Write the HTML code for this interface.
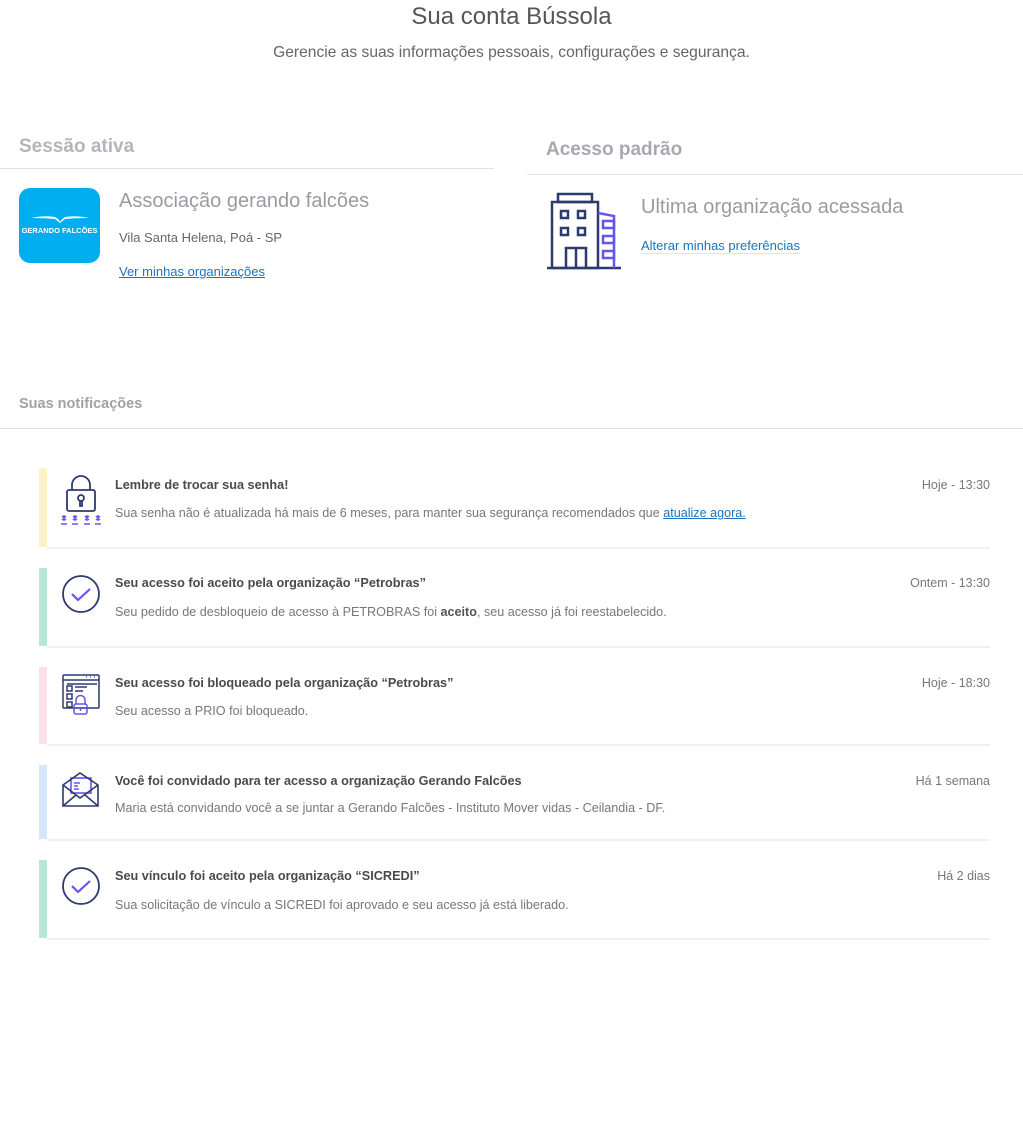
<!DOCTYPE html>
<html><head><meta charset="utf-8"><style>
*{margin:0;padding:0;box-sizing:border-box}
body{width:1023px;height:1140px;background:#fff;font-family:"Liberation Sans",sans-serif;position:relative;overflow:hidden;color:#555}
.a{position:absolute;white-space:nowrap}
.bar{position:absolute;left:39px;width:8px}
.line{position:absolute;left:47px;width:943px;height:2px;background:#f0f0f2}
.t{position:absolute;left:115px;font-size:12.7px;font-weight:bold;color:#4a4a4a;white-space:nowrap}
.d{position:absolute;left:115px;font-size:12.6px;color:#777;white-space:nowrap}
.tm{position:absolute;right:33px;font-size:12.5px;color:#777;white-space:nowrap}
a{color:#1a73c0;text-decoration:underline}
</style></head><body>
<div class="a" style="left:0;width:1023px;text-align:center;top:3px;font-size:24px;color:#555">Sua conta Bússola</div>
<div class="a" style="left:0;width:1023px;text-align:center;top:44px;font-size:15.6px;color:#666">Gerencie as suas informações pessoais, configurações e segurança.</div>

<div class="a" style="left:19px;top:136px;font-size:19px;font-weight:bold;color:#b4b4bc">Sessão ativa</div>
<div class="a" style="left:0;top:168px;width:494px;height:1px;background:#e2e2e6"></div>
<div class="a" style="left:19px;top:188px;width:81px;height:75px;border-radius:11px;background:#00aeef">
 <svg width="81" height="75" style="position:absolute;left:0;top:0"><path d="M12 30 Q24 27 36 29 Q40 31 41 34 Q43 31 46 29 Q58 27 70 30 Q56 30 46 31 L41 35 L36 31 Q26 30 12 30Z" fill="#fff"/></svg>
 <div class="a" style="left:0;width:81px;text-align:center;top:38px;font-size:7.5px;font-weight:bold;color:#fff">GERANDO FALCÕES</div>
</div>
<div class="a" style="left:119px;top:190px;font-size:20px;color:#9a9aa2">Associação gerando falcões</div>
<div class="a" style="left:119px;top:230px;font-size:13px;color:#666">Vila Santa Helena, Poá - SP</div>
<div class="a" style="left:119px;top:264px;font-size:13px"><a>Ver minhas organizações</a></div>

<div class="a" style="left:546px;top:139px;font-size:19px;font-weight:bold;color:#a8a8b0">Acesso padrão</div>
<div class="a" style="left:527px;top:174px;width:496px;height:1px;background:#e2e2e6"></div>
<svg class="a" style="left:540px;top:185px" width="90" height="90" viewBox="540 185 90 90" fill="none" stroke-width="2.5">
 <g stroke="#2d3a6e">
 <rect x="558" y="194" width="34" height="8"/>
 <rect x="552" y="202" width="46" height="66"/>
 <rect x="561" y="211" width="7" height="7"/><rect x="578" y="211" width="7" height="7"/>
 <rect x="561" y="228" width="7" height="7"/><rect x="578" y="228" width="7" height="7"/>
 <path d="M566 268V248H586V268M576 248V268M547 268H621"/>
 </g>
 <g stroke="#6655ee"><path d="M598 213L614 216V268"/>
 <rect x="603" y="221" width="11" height="7"/><rect x="603" y="236" width="11" height="7"/><rect x="603" y="251" width="11" height="7"/></g>
</svg>
<div class="a" style="left:641px;top:196px;font-size:20px;color:#9a9aa2">Ultima organização acessada</div>
<div class="a" style="left:641px;top:238px;font-size:13px"><a style="text-decoration:none;border-bottom:1px solid #dde6f0">Alterar minhas preferências</a></div>

<div class="a" style="left:19px;top:396px;font-size:14.5px;font-weight:bold;color:#a0a0a8">Suas notificações</div>
<div class="a" style="left:0;top:428px;width:1023px;height:1px;background:#e2e2e6"></div>

<!-- card1 -->
<div class="bar" style="top:468px;height:79px;background:#fdf1c8"></div>
<div class="line" style="top:547px"></div>
<svg class="a" style="left:58px;top:474px" width="46" height="54" fill="none" stroke-width="1.8">
 <g stroke="#2d3a6e"><path d="M14 16V11a9 9 0 0 1 18 0v5"/><rect x="9" y="16" width="28" height="21" rx="2"/><circle cx="23" cy="24" r="3"/><path d="M22 27v5h2v-5"/></g>
 <g stroke="#6655ee" stroke-width="1.4"><path d="M4 42l4 4M8 42l-4 4M6 41v6M15 42l4 4M19 42l-4 4M17 41v6M27 42l4 4M31 42l-4 4M29 41v6M38 42l4 4M42 42l-4 4M40 41v6M3 50h6M14 50h6M26 50h6M37 50h6"/></g>
</svg>
<div class="t" style="top:478px">Lembre de trocar sua senha!</div>
<div class="d" style="top:506px">Sua senha não é atualizada há mais de 6 meses, para manter sua segurança recomendados que <a>atualize agora.</a></div>
<div class="tm" style="top:478px">Hoje - 13:30</div>

<!-- card2 -->
<div class="bar" style="top:568px;height:78px;background:#b6e6d6"></div>
<div class="line" style="top:646px"></div>
<svg class="a" style="left:60px;top:574px" width="42" height="42" fill="none">
 <circle cx="21" cy="20" r="18" stroke="#2d3a6e" stroke-width="1.8"/>
 <path d="M12 20l6 6 12-11" stroke="#6655ee" stroke-width="2.2" stroke-linejoin="round"/>
</svg>
<div class="t" style="top:576px">Seu acesso foi aceito pela organização “Petrobras”</div>
<div class="d" style="top:605px">Seu pedido de desbloqueio de acesso à PETROBRAS foi <b style="color:#555">aceito</b>, seu acesso já foi reestabelecido.</div>
<div class="tm" style="top:576px">Ontem - 13:30</div>

<!-- card3 -->
<div class="bar" style="top:667px;height:77px;background:#fde0e6"></div>
<div class="line" style="top:744px"></div>
<svg class="a" style="left:62px;top:674px" width="40" height="44" fill="none" stroke-width="1.5">
 <g stroke="#2d3a6e"><rect x="1" y="1" width="36" height="33" rx="1"/><path d="M1 6h36M5 10h30M5 12h5v5H5zM5 20h5v5H5zM5 28h5v5H5zM13 13h12M13 17h8"/></g>
 <g stroke="#6655ee"><rect x="12" y="30" width="13" height="10" rx="2"/><path d="M14 30v-4a4.5 4.5 0 0 1 9 0v4M18.5 34v3"/><path d="M24 3h1M28 3h1M32 3h1"/></g>
</svg>
<div class="t" style="top:676px">Seu acesso foi bloqueado pela organização “Petrobras”</div>
<div class="d" style="top:704px">Seu acesso a PRIO foi bloqueado.</div>
<div class="tm" style="top:676px">Hoje - 18:30</div>

<!-- card4 -->
<div class="bar" style="top:765px;height:74px;background:#d4e6fc"></div>
<div class="line" style="top:839px"></div>
<svg class="a" style="left:61px;top:772px" width="40" height="36" fill="none" stroke-width="1.6">
 <rect x="10" y="6" width="20" height="15" fill="#fff" stroke="#6655ee"/>
 <path d="M13 11h6M13 14h4M13 17h5" stroke="#6655ee"/>
 <g stroke="#2d3a6e"><path d="M2 13L19 1l18 12v21H2z"/><path d="M2 13l17 13 18-13M2 34l13-11M37 34L24 23"/></g>
</svg>
<div class="t" style="top:774px">Você foi convidado para ter acesso a organização Gerando Falcões</div>
<div class="d" style="top:801px">Maria está convidando você a se juntar a Gerando Falcões - Instituto Mover vidas - Ceilandia - DF.</div>
<div class="tm" style="top:774px">Há 1 semana</div>

<!-- card5 -->
<div class="bar" style="top:860px;height:78px;background:#b6e6d6"></div>
<div class="line" style="top:938px"></div>
<svg class="a" style="left:60px;top:866px" width="42" height="42" fill="none">
 <circle cx="21" cy="20" r="18" stroke="#2d3a6e" stroke-width="1.8"/>
 <path d="M12 20l6 6 12-11" stroke="#6655ee" stroke-width="2.2" stroke-linejoin="round"/>
</svg>
<div class="t" style="top:869px">Seu vínculo foi aceito pela organização “SICREDI”</div>
<div class="d" style="top:898px">Sua solicitação de vínculo a SICREDI foi aprovado e seu acesso já está liberado.</div>
<div class="tm" style="top:869px">Há 2 dias</div>
</body></html>
